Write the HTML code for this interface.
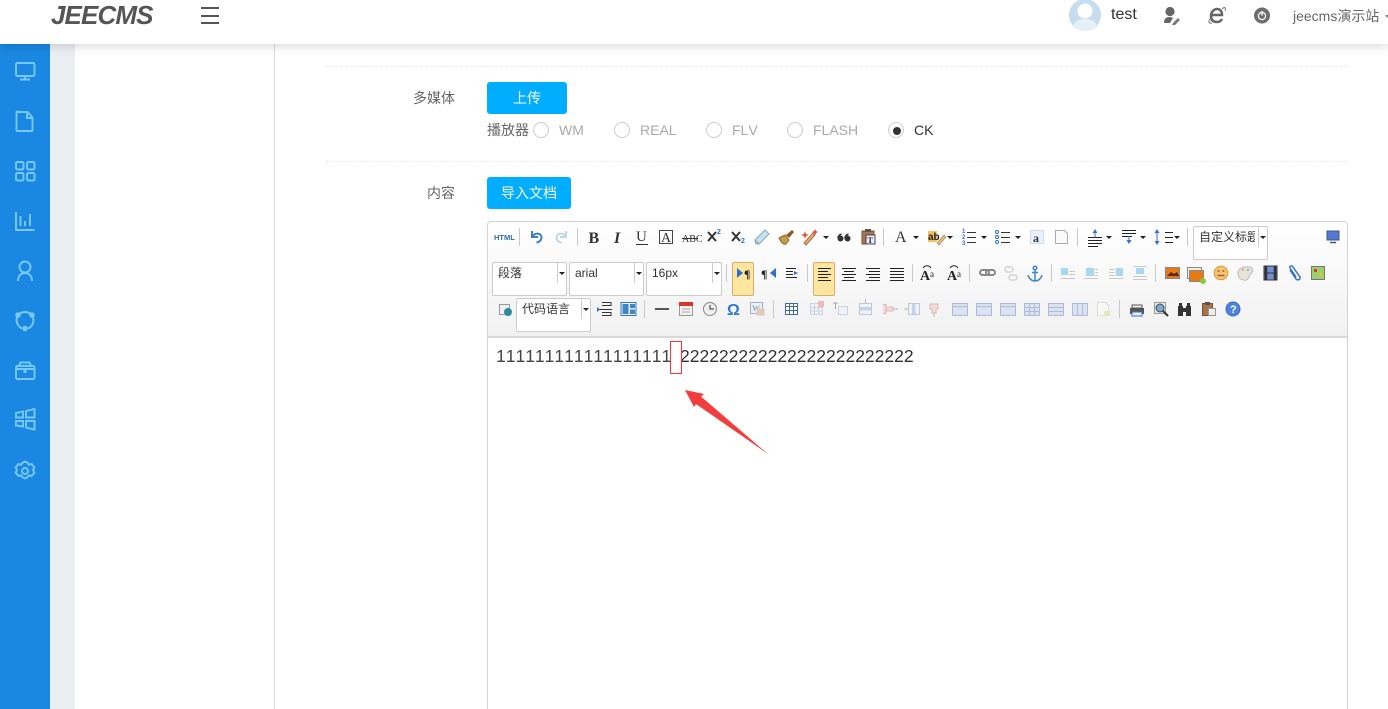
<!DOCTYPE html>
<html lang="zh"><head><meta charset="utf-8"><title>JEECMS</title>
<style>
html,body{margin:0;padding:0;width:1388px;height:709px;overflow:hidden}
body{position:relative;background:#fff;font-family:"Liberation Sans","Noto Sans CJK SC",sans-serif;font-size:14px;color:#666;font-kerning:none}
#w{position:absolute;left:0;top:0;width:1388px;height:709px;overflow:hidden}
.a{position:absolute;white-space:nowrap}
.sel{position:absolute;box-sizing:border-box;background:#fff;border:1px solid #ccc;border-radius:2px;height:34px;font-size:12px;color:#333;line-height:20px;padding-left:5px;white-space:nowrap}
.sel i{position:absolute;top:0;right:8px;width:1px;height:20px;background:#ccc}
.sel b{position:absolute;top:9px;right:1px;border:3px solid transparent;border-top:3px solid #222;border-bottom:0}
.btn{position:absolute;background:#00adff;color:#fff;border-radius:3px;text-align:center;height:32px;line-height:32px;font-size:14px}
.r{position:absolute;top:122px;width:14px;height:14px;border:1px solid #ccc;border-radius:50%;background:#fff}
.on{position:absolute;box-sizing:border-box;width:22px;height:34px;top:262px;background:#ffe69f;border:1px solid #dcac6c;border-radius:2px}
</style></head><body><div id="w">

<!-- layout -->
<div class="a" style="left:0;top:44px;width:50px;height:665px;background:#1a88e2"></div>
<div class="a" style="left:50px;top:44px;width:25px;height:665px;background:#ebeef3"></div>
<div class="a" style="left:274px;top:44px;width:1px;height:665px;background:#d3dce4"></div>
<div class="a" style="left:0;top:0;width:1388px;height:44px;background:#fff;box-shadow:0 2px 10px rgba(0,0,0,.16)"></div>

<!-- header -->
<div class="a" style="left:51px;top:-2px;font:italic bold 26px/34px 'Liberation Sans',sans-serif;color:#555;letter-spacing:-.9px">JEECMS</div>
<div class="a" style="left:201px;top:7px;width:18px;height:2px;background:#555"></div>
<div class="a" style="left:201px;top:15px;width:18px;height:2px;background:#555"></div>
<div class="a" style="left:201px;top:22px;width:18px;height:2px;background:#555"></div>
<svg class="a" style="left:1060px;top:0" width="220" height="44" viewBox="1060 0 220 44">
<circle cx="1085" cy="15" r="16" fill="#c6dcef"/>
<circle cx="1085" cy="11" r="7.5" fill="#fff"/>
<path d="M1073 27c1-6 6-8 12-8s11 2 12 8c-3 3-7 4-12 4s-9-1-12-4z" fill="#e6f0f8"/>
<circle cx="1170" cy="11.500" r="4.600" fill="#666"/>
<path d="M1164 23c0-4 2-6 5-6 2 0 3 .5 4 1l-3 5z" fill="#666"/>
<path d="M1173 23l5-5 2 2-5 5-3 0z" fill="#777"/>
<path d="M1211 15h11c0-4-2-6-5-6s-6 3-6 7 2 6 6 6c2 0 4-1 5-3" fill="none" stroke="#666" stroke-width="2.500"/>
<path d="M1222 9c3-3 4-1 3 2M1210 19c-2 3-1 5 2 4" fill="none" stroke="#777"/>
<circle cx="1262" cy="15.500" r="8" fill="#6e6e6e"/>
<circle cx="1262" cy="16" r="3.600" fill="none" stroke="#fff" stroke-width="1.200"/>
<rect x="1261.300" y="11" width="1.500" height="4.500" fill="#fff"/>
</svg>
<div class="a" style="left:1111px;top:6px;font-size:16px;line-height:18px;color:#333">test</div>
<div class="a" style="left:1293px;top:8px;font-size:14px;line-height:16px;color:#666">jeecms演示站</div>
<div class="a" style="left:1385px;top:15px;border:2.500px solid transparent;border-top:3px solid #888"></div>

<!-- sidebar icons -->
<svg class="a" style="left:0;top:44px" width="50" height="450" viewBox="0 44 50 450" fill="none" stroke="#78c9fa" stroke-width="1.900">
<rect x="16" y="63" width="18.500" height="13" rx="1.500"/><path d="M25 76v3M20 79.500h10"/>
<path d="M17.500 112h10l5 5.500v12.500a1 1 0 0 1-1 1h-14a1 1 0 0 1-1-1v-17.500a1 1 0 0 1 1-1zM27 112v6h5.500"/>
<rect x="16" y="162" width="7.500" height="7.500" rx="1.500"/><rect x="27" y="162" width="7.500" height="7.500" rx="1.500"/><rect x="16" y="173" width="7.500" height="7.500" rx="1.500"/><rect x="27" y="173" width="7.500" height="7.500" rx="1.500"/>
<path d="M16 212v18h18.500M20.500 216v10M25 221v5M30 214v12"/>
<circle cx="25" cy="267" r="5.500"/><path d="M18 281c0-5 3-8 7-8s7 3 7 8"/>
<path d="M18 315c-3 5-1 11 4 13.500M28 328.500c5-2 7-8 4-13.500M20 313.500c3-2 7-2 10 0"/>
<circle cx="18" cy="315" r="1.800" fill="#78c9fa"/><circle cx="32" cy="315" r="1.800" fill="#78c9fa"/><circle cx="25" cy="328.500" r="1.800" fill="#78c9fa"/>
<rect x="16" y="366" width="18.500" height="13" rx="1.500"/><path d="M15.500 369h19.500M19 366l1.500-3.500h9l1.500 3.500"/><path d="M25 370v3" stroke-width="3"/>
<path d="M16 413l7-1.500v6h-7zM26 411l8.500-2v8.500h-8.500zM16 421h7v5.500l-7-1zM26 421h8.500v8.500l-8.500-2z"/>
<path d="M25 461.500l3 1.500 .6 1.700 3-.6 2.800 3.400-1.400 2.500 1.400 2.500-2.800 3.400-3-.6-.6 1.700-3 1.500-3-1.500-.6-1.700-3 .6-2.800-3.400 1.400-2.500-1.400-2.500 2.800-3.400 3 .6 .6-1.700z"/><circle cx="25" cy="471" r="3"/>
</svg>

<!-- form -->
<div class="a" style="left:325px;top:66px;width:1023px;border-top:1px dashed #eaeaea"></div>
<div class="a" style="left:325px;top:161px;width:1023px;border-top:1px dashed #eaeaea"></div>
<div class="a" style="left:413px;top:89px;line-height:18px;font-size:14px;color:#666">多媒体</div>
<div class="btn" style="left:487px;top:82px;width:80px">上传</div>
<div class="a" style="left:487px;top:121px;line-height:18px;color:#666">播放器</div>
<div class="r" style="left:533px"></div><div class="a" style="left:559px;top:122px;line-height:16px;color:#aaa">WM</div>
<div class="r" style="left:614px"></div><div class="a" style="left:640px;top:122px;line-height:16px;color:#aaa">REAL</div>
<div class="r" style="left:706px"></div><div class="a" style="left:732px;top:122px;line-height:16px;color:#aaa">FLV</div>
<div class="r" style="left:787px"></div><div class="a" style="left:813px;top:122px;line-height:16px;color:#aaa">FLASH</div>
<div class="r" style="left:888px"></div><div class="a" style="left:893px;top:127px;width:6px;height:6px;border:1px solid #333;border-radius:50%;background:#333"></div>
<div class="a" style="left:914px;top:122px;line-height:16px;color:#333">CK</div>
<div class="a" style="left:427px;top:184px;line-height:18px;color:#666">内容</div>
<div class="btn" style="left:487px;top:177px;width:84px">导入文档</div>

<!-- editor -->
<div class="a" style="left:487px;top:221px;width:861px;height:500px;box-sizing:border-box;border:1px solid #d4d4d4;border-radius:4px 4px 0 0"></div>
<div class="a" style="left:488px;top:222px;width:859px;height:114px;background:linear-gradient(#fff,#f1f1f1);border-bottom:2px solid #d8d8d8;border-radius:3px 3px 0 0"></div>

<div class="on" style="left:732px"></div>
<div class="on" style="left:813px"></div>
<div class="sel" style="left:492px;top:262px;width:75px">段落<i></i><b></b></div>
<div class="sel" style="left:569px;top:262px;width:75px">arial<i></i><b></b></div>
<div class="sel" style="left:646px;top:262px;width:76px">16px<i></i><b></b></div>
<div class="sel" style="left:516px;top:298px;width:75px">代码语言<i></i><b></b></div>
<div class="sel" style="left:1193px;top:226px;width:75px"><span style="display:inline-block;width:56px;overflow:hidden;vertical-align:top">自定义标题</span><i></i><b></b></div>

<svg class="a" style="left:488px;top:222px" width="860" height="114" viewBox="488 222 860 114" fill="none" font-family="'Liberation Serif',serif">
<!-- separators -->
<g stroke="#c9c9c9">
<path d="M519.500 228v18M577.500 228v18M883.500 228v18M1077.500 228v18M1187.500 228v18"/>
<path d="M726.500 264v18M807.500 264v18M912.500 264v18M969.500 264v18M1051.500 264v18M1155.500 264v18"/>
<path d="M644.500 300v18M773.500 300v18M1119.500 300v18"/>
</g>
<!-- row1 -->
<text x="494" y="240" font-family="'Liberation Sans',sans-serif" font-size="7.500" font-weight="bold" fill="#2f6ea8">HTML</text>
<path d="M532 231v6h6M532.500 236.500c2-4 9-4 9 1 0 3-3 5-5 5" stroke="#3b7fc4" stroke-width="2"/>
<path d="M566 231v6h-6M565.500 236.500c-2-4-9-4-9 1 0 3 3 5 5 5" stroke="#bcd6ea" stroke-width="2"/>
<g fill="#333" font-size="16">
<text x="588.500" y="243" font-weight="bold">B</text>
<text x="614" y="243" font-style="italic" font-weight="bold">I</text>
<text x="636" y="241" font-size="15">U</text><path d="M636 244.500h12" stroke="#333"/>
<rect x="659.500" y="230.500" width="13" height="13" fill="none" stroke="#444"/><text x="661" y="242" font-size="14">A</text>
<text x="682" y="242" font-size="10">ABC</text><path d="M682 238.500h16" stroke="#333"/>
</g>
<path d="M708 232l8 9M716 232l-8 9M732 232l8 9M740 232l-8 9" stroke="#333" stroke-width="2"/>
<text x="717" y="234" font-size="7" font-weight="bold" fill="#2f6fd0" font-family="'Liberation Sans',sans-serif">2</text>
<text x="741" y="243" font-size="7" font-weight="bold" fill="#2f6fd0" font-family="'Liberation Sans',sans-serif">2</text>
<path d="M755 240l10-10 4 4-10 10h-3z" fill="#c6e2f5" stroke="#8aa"/><path d="M755 240l4 4" stroke="#999"/>
<path d="M779 238l6-3 4 5-3 4c-3 1-5-2-7-6z" fill="#c79a4d" stroke="#8a6a2a"/><path d="M786 235l6-5 2 2-5 6z" fill="#8a5a24"/>
<path d="M804 243l9-10 2 2-9 10z" fill="#f0b64a" stroke="#a66"/><path d="M805 231l1 3 3 1-3 1-1 3-1-3-3-1 3-1zM815 229l1 2 2 1-2 1-1 2-1-2-2-1 2-1z" fill="#e8502a"/>
<circle cx="840.500" cy="238.500" r="3" fill="#333"/><circle cx="847.500" cy="238.500" r="3" fill="#333"/>
<path d="M838 238c0-2 1-3 3.500-4M845 238c0-2 1-3 3.500-4" stroke="#333" stroke-width="1.500"/>
<path d="M862 231h12v13h-12z" fill="#a9744a" stroke="#7a5230"/><rect x="865" y="229" width="6" height="3" fill="#555"/>
<rect x="866" y="235" width="9" height="9" fill="#eef" stroke="#445"/><text x="867.500" y="243" font-size="8" font-weight="bold" fill="#222">T</text>
<text x="895" y="242" font-size="16" fill="#333">A</text>
<rect x="928" y="231" width="9" height="11" fill="#f4c060"/>
<text x="928" y="240" font-size="10" font-weight="bold" font-family="'Liberation Sans',sans-serif" fill="#222">ab</text>
<path d="M937 243l7-8 2 2-7 8z" fill="#f0c060" stroke="#444" stroke-width=".5"/>
<g stroke="#333"><path d="M967 232.500h9M967 237.500h9M967 242.500h9M1001 232.500h9M1001 237.500h9M1001 242.500h9"/></g>
<g fill="#2f6fd0" font-size="6" font-family="'Liberation Sans',sans-serif" font-weight="bold"><text x="962" y="233">1</text><text x="962" y="239">2</text><text x="962" y="245">3</text></g>
<circle cx="997" cy="232" r="1.500" stroke="#2f6fd0"/><circle cx="997" cy="237" r="1.500" stroke="#2f6fd0"/><circle cx="997" cy="242" r="1.500" stroke="#2f6fd0"/>
<rect x="1030.500" y="230.500" width="13" height="13" fill="#e8f1fb" stroke="#a8c4e4" stroke-dasharray="1 1"/><text x="1033" y="242" font-size="12" font-weight="bold" fill="#333">a</text>
<path d="M1055.500 230.500h9l3 3v10h-12z" fill="#fafafa" stroke="#aaa"/>
<g stroke="#222"><path d="M1088 240.500h14M1088 243.500h14M1088 237.500h14M1088 246.500h10M1122 230.500h14M1122 233.500h14M1122 236.500h10"/><path d="M1165 232.500h8M1165 237.500h8M1165 242.500h8"/></g>
<path d="M1095 229l-2.500 4h5zM1129 244l-2.500-4h5zM1157 229l-2.500 4h5zM1157 245l-2.500-4h5z" fill="#3a6fd0"/><path d="M1095 232v5M1129 236v6M1157 232v10" stroke="#3a6fd0"/>
<g fill="#222"><path d="M823 236h6l-3 3zM913 236h6l-3 3zM947 236h6l-3 3zM981 236h6l-3 3zM1015 236h6l-3 3zM1106 236h6l-3 3zM1140 236h6l-3 3zM1174 236h6l-3 3z"/></g>
<rect x="1327" y="231" width="12" height="9" fill="#5878d0" stroke="#3a5a8a"/><path d="M1330 242.500h6" stroke="#3a5a8a" stroke-width="1.500"/>

<!-- row2 -->
<path d="M737 268v10l6-5z" fill="#2f6fd0"/><text x="744" y="278" font-size="12" font-weight="bold" fill="#222">¶</text>
<path d="M776 268v10l-6-5z" fill="#2f6fd0"/><text x="761" y="278" font-size="12" font-weight="bold" fill="#222">¶</text>
<g stroke="#222"><path d="M786 268.500h10M786 271.500h7M786 274.500h7M786 277.500h11"/></g><path d="M794 271l4 2-4 2z" fill="#2f6fd0"/>
<g stroke="#222"><path d="M818 268.500h13M818 271.500h10M818 274.500h13M818 277.500h10M818 280.500h13"/>
<path d="M842 268.500h14M844 271.500h10M842 274.500h14M844 277.500h10M842 280.500h14"/>
<path d="M866 268.500h14M869 271.500h11M866 274.500h14M869 277.500h11M866 280.500h14"/>
<path d="M890 268.500h14M890 271.500h14M890 274.500h14M890 277.500h14M890 280.500h14"/></g>
<text x="920" y="280" font-size="14" font-weight="bold" fill="#222">A</text><text x="930" y="277" font-size="9" fill="#222">a</text><path d="M923 268c2-3 6-3 8 0" stroke="#222"/>
<text x="947" y="280" font-size="14" font-weight="bold" fill="#222">A</text><text x="957" y="277" font-size="9" fill="#222">a</text><path d="M950 268c2-3 6-3 8 0" stroke="#222"/>
<rect x="980" y="270" width="9" height="5" rx="2.500" stroke="#888" stroke-width="2"/><rect x="986" y="270" width="9" height="5" rx="2.500" stroke="#888" stroke-width="2"/>
<rect x="1005" y="267" width="8" height="5" rx="2.500" stroke="#ddd" stroke-width="2"/><rect x="1009" y="275" width="8" height="5" rx="2.500" stroke="#ddd" stroke-width="2"/>
<circle cx="1035" cy="268" r="1.800" stroke="#3f86c8" stroke-width="1.500"/><path d="M1035 270v11M1032 272.500h6M1028 275c1 4 4 6 7 6s6-2 7-6" stroke="#3f86c8" stroke-width="1.500"/>
<g stroke="#c8c8c8"><path d="M1069 271.500h6M1069 274.500h6M1061 278.500h14"/></g>
<rect x="1061" y="268" width="7" height="7" fill="#a8d8f0"/>
<rect x="1086" y="268" width="8" height="8" fill="#a8d8f0"/><path d="M1095 269.500h3M1095 272.500h3M1095 275.500h3M1084 278.500h14" stroke="#c8c8c8"/>
<rect x="1116" y="268" width="7" height="8" fill="#a8d8f0"/><path d="M1109 269.500h6M1109 272.500h6M1109 275.500h6M1109 278.500h14" stroke="#c8c8c8"/>
<rect x="1136" y="268" width="8" height="6" fill="#a8d8f0"/><path d="M1133 266.500h14M1133 276.500h14M1133 279.500h14" stroke="#c8c8c8"/>
<rect x="1165.500" y="267.500" width="14" height="11" fill="#e87a14" stroke="#888"/><path d="M1167 276l4-4 3 2 3-2 2 4z" fill="#5a2a10"/>
<rect x="1187.500" y="267.500" width="14" height="11" fill="#eee" stroke="#888"/><rect x="1189.500" y="270.500" width="14" height="11" fill="#e87a14" stroke="#888"/><circle cx="1203" cy="281" r="3" fill="#8bc83c"/>
<circle cx="1221" cy="273" r="6.800" fill="#f5c66a" stroke="#d89438"/><circle cx="1218.500" cy="271" r="1" fill="#a55"/><circle cx="1223.500" cy="271" r="1" fill="#a55"/><path d="M1217.500 275.500h7" stroke="#a55" stroke-width="1.500"/>
<path d="M1238 273c0-5 7-7 12-6 5 2 2 6 0 8-2 3-2 6-6 5-4 0-6-3-6-7z" fill="#e8e4d8" stroke="#bbb"/><circle cx="1248" cy="270" r="1.200" fill="#7cb"/><circle cx="1243" cy="270" r="1.200" fill="#ea8"/>
<rect x="1264" y="266" width="13" height="14" fill="#7090d8" stroke="#333"/><path d="M1264 273h13" stroke="#333"/><path d="M1266 266v14M1275 266v14" stroke="#333" stroke-width="2.500"/>
<path d="M1290 270l6 9c2 2 5 0 4-2l-7-10c-1-2-4-1-3 1l6 9" stroke="#2f6fd0" stroke-width="1.400"/>
<rect x="1311.500" y="266.500" width="13" height="13" fill="#9bd070" stroke="#777"/><rect x="1314" y="269" width="3" height="3" fill="#d33"/><rect x="1319" y="273" width="3" height="3" fill="#e8c030"/>

<!-- row3 -->
<rect x="499.500" y="304.500" width="10" height="10" fill="#f0f0f0" stroke="#999"/><circle cx="508" cy="312" r="4" fill="#2d8a9e"/>
<path d="M602 302.500h9v3h-9M602 315.500h9v-3h-9M599 309.500h13" stroke="#333"/><path d="M597 307v5l3-2.500z" fill="#2f6fd0"/>
<rect x="621" y="302.500" width="15" height="13" fill="#eef" stroke="#3f78b8"/><rect x="622.500" y="304" width="6" height="10" fill="#3f86c8"/><rect x="630" y="304" width="5" height="4" fill="#3f86c8"/><rect x="630" y="309.500" width="5" height="4.500" fill="#3f86c8"/>
<path d="M655 309h14" stroke="#222" stroke-width="1.500"/>
<rect x="679.500" y="303.500" width="13" height="12" fill="#f4f0f0" stroke="#999"/><rect x="679" y="302" width="14" height="4" fill="#d8342a"/><path d="M682 309h8M682 312h8" stroke="#aaa"/>
<circle cx="710" cy="309" r="6.500" fill="#eee" stroke="#888"/><path d="M710 305v4h4" stroke="#333"/>
<text x="727" y="315" font-size="16" font-weight="bold" fill="#3478c6" font-family="'Liberation Sans',sans-serif">Ω</text>
<rect x="750.500" y="302.500" width="12" height="11" fill="#eaf2fa" stroke="#aac"/><text x="752" y="311" font-size="8" font-weight="bold" fill="#8ab">W</text><rect x="757" y="309" width="7" height="6" fill="#eec8a8" stroke="#ccc"/>
<!-- table group -->
<rect x="785.500" y="303.500" width="12" height="11" fill="#fff" stroke="#3f68a8"/><path d="M785.500 306.500h12M785.500 310.500h12M789.500 303.500v11M793.500 303.500v11" stroke="#3f68a8"/>
<g opacity=".55">
<rect x="810.500" y="303.500" width="12" height="11" fill="#eef2f8" stroke="#a8b8d0"/><path d="M810.500 307.500h12M810.500 311h12M814.500 303.500v11M818.500 303.500v11" stroke="#a8b8d0"/><rect x="818" y="301" width="6" height="6" fill="#e88"/>
<path d="M833 303h5M835.500 303v6" stroke="#666"/><rect x="838.500" y="306.500" width="9" height="8" fill="#eef2f8" stroke="#a8b8d0"/>
<rect x="859.500" y="303.500" width="12" height="11" fill="#eef2f8" stroke="#8aa8d0"/><rect x="860" y="307" width="11" height="3.500" fill="#9dbbe0"/><path d="M865.500 299v4" stroke="#888"/>
<path d="M883 304.500h3v9h-3M886 307h7v4h-7z" stroke="#c88" fill="#f4c8c8"/><path d="M893 309h5" stroke="#888"/>
<rect x="908.500" y="303.500" width="11" height="11" fill="#eef2f8" stroke="#8aa8d0"/><rect x="912" y="304" width="3.500" height="10" fill="#9dbbe0"/><path d="M904 309h4" stroke="#888"/>
<path d="M930 304h8v5h-2v4h-4v-4h-2z" fill="#f4c8c8" stroke="#c88"/><path d="M934 313v4" stroke="#888"/>
</g>
<g fill="#d8e0f0" stroke="#a0b4d4" opacity=".85">
<rect x="952.500" y="303.500" width="15" height="12"/><rect x="976.500" y="303.500" width="15" height="12"/><rect x="1000.500" y="303.500" width="15" height="12"/><rect x="1024.500" y="303.500" width="15" height="12"/><rect x="1048.500" y="303.500" width="15" height="12"/><rect x="1072.500" y="303.500" width="15" height="12"/>
<path d="M952.500 306.500h15M976.500 306.500h15M1000.500 306.500h15M1024.500 307.500h15M1024.500 311.500h15M1029.500 303.500v12M1034.500 303.500v12M1048.500 307.500h15M1048.500 311.500h15M1077.500 303.500v12M1082.500 303.500v12"/>
</g>
<path d="M1097.500 302.500h8l3 3v10h-11z" fill="#f8f8f4" stroke="#ddd"/><rect x="1104" y="311" width="6" height="5" fill="#e4e8c0"/>
<rect x="1132" y="305" width="10" height="3" fill="#eee" stroke="#555"/><rect x="1130" y="308" width="14" height="6" fill="#555"/><rect x="1132" y="312" width="10" height="4" fill="#eaf2ff" stroke="#2f6fd0"/>
<rect x="1154.500" y="302.500" width="11" height="11" fill="#eee" stroke="#999"/><circle cx="1160" cy="308" r="4" fill="#7aaad8" stroke="#444"/><path d="M1163 311l5 5" stroke="#333" stroke-width="2"/>
<path d="M1178 306h5v10h-5zM1186 306h5v10h-5zM1183 308h3v4h-3z" fill="#333"/><rect x="1179" y="303" width="3" height="3" fill="#333"/><rect x="1187" y="303" width="3" height="3" fill="#333"/>
<rect x="1202.500" y="303.500" width="10" height="12" fill="#a9744a" stroke="#7a5230"/><rect x="1205" y="302" width="5" height="3" fill="#555"/><rect x="1208.500" y="308.500" width="7" height="7" fill="#eee" stroke="#999"/>
<circle cx="1233" cy="309" r="7" fill="#4d84e0" stroke="#3a6cc8"/>
<text x="1230" y="313" font-size="11" font-weight="bold" fill="#fff" font-family="'Liberation Sans',sans-serif">?</text>
</svg>

<!-- editor content -->
<div class="a" style="left:496px;top:346px;font-size:17.500px;line-height:20px;color:#444">111111111111111111</div>
<div class="a" style="left:680px;top:346px;font-size:17.500px;line-height:20px;color:#333">222222222222222222222222</div>
<div class="a" style="left:670px;top:341px;width:10px;height:31px;border:1px solid #f33"></div>
<svg class="a" style="left:680px;top:385px" width="95" height="75" viewBox="680 385 95 75"><path d="M685 390L704 394 701 396.500 768 454 696 404 694 407z" fill="#f33c3c"/></svg>
</div></body></html>
